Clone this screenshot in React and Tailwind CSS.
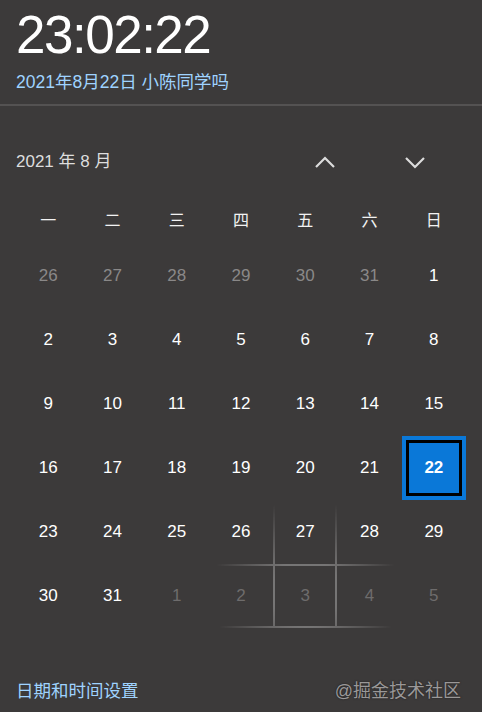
import React from "react";

const weeks = [
  [26, 27, 28, 29, 30, 31, 1],
  [2, 3, 4, 5, 6, 7, 8],
  [9, 10, 11, 12, 13, 14, 15],
  [16, 17, 18, 19, 20, 21, 22],
  [23, 24, 25, 26, 27, 28, 29],
  [30, 31, 1, 2, 3, 4, 5],
];

const dayNames = ["一", "二", "三", "四", "五", "六", "日"];

function Chevron({ up }) {
  return (
    <svg width="24" height="14" viewBox="0 0 24 14" fill="none">
      <path
        d={up ? "M3 12 L12 3 L21 12" : "M3 3 L12 12 L21 3"}
        stroke="#dcdcdc"
        strokeWidth="2.2"
      />
    </svg>
  );
}

function DayCell({ day, row, col }) {
  const other = (row === 0 && col < 6) || (row === 5 && col > 1);
  const today = row === 3 && col === 6;

  if (today) {
    return (
      <div className="h-[64px] border-[4px] border-[#0a78d8]">
        <div className="h-full border-[3px] border-black bg-[#0a78d8] flex items-center justify-center text-white font-bold text-[17px]">
          {day}
        </div>
      </div>
    );
  }

  let color = "text-white";
  if (other) color = row === 0 ? "text-[#8a8888]" : "text-[#6e6c6c]";

  return (
    <div className={`h-[64px] flex items-center justify-center text-[17px] ${color}`}>
      {day}
    </div>
  );
}

export default function App() {
  return (
    <div
      className="w-[482px] h-[712px] bg-[#3c3a3a] overflow-hidden flex flex-col"
      style={{ fontFamily: '"Liberation Sans", "Noto Sans CJK SC", sans-serif' }}
    >
      {/* clock */}
      <div className="px-4 pt-2 pb-[12px]">
        <div className="text-white text-[53px] leading-none tracking-[-1.5px]">
          23:02:22
        </div>
        <div className="mt-[11px] text-[#9fd3ff] text-[17.5px] leading-[20px]">
          2021年8月22日 小陈同学吗
        </div>
      </div>
      <div className="h-[2px] bg-[#545252]" />

      {/* calendar */}
      <div className="px-4 pt-[36px]">
        <div className="h-[40px] flex items-center">
          <span className="text-[#dedede] text-[17px]">2021 年 8 月</span>
          <div className="ml-auto flex items-center gap-[66px] pr-[39px]">
            <Chevron up />
            <Chevron />
          </div>
        </div>

        <div className="mt-[19px] w-[450px] grid grid-cols-7 h-[40px] items-center">
          {dayNames.map((d) => (
            <div key={d} className="text-center text-[#f2f2f2] text-[16px]">
              {d}
            </div>
          ))}
        </div>

        <div className="mt-[3px] w-[450px] relative">
          <div className="grid grid-cols-7">
            {weeks.map((w, r) =>
              w.map((d, c) => <DayCell key={`${r}-${c}`} day={d} row={r} col={c} />)
            )}
          </div>
          {/* hover reveal lines */}
          <div className="absolute left-[192.86px] top-[256px] w-[192.86px] h-[128px] grid grid-cols-3 grid-rows-2 pointer-events-none [mask-image:radial-gradient(circle_at_50%_72%,black_25%,transparent_70%)]">
            <div />
            <div className="border-x-2 border-white/30" />
            <div />
            <div className="border-y-2 border-white/30" />
            <div className="border-2 border-white/30" />
            <div className="border-y-2 border-white/30" />
          </div>
        </div>
      </div>

      {/* footer */}
      <div className="mt-auto px-4 pb-[7px] flex items-center justify-between">
        <span className="text-[#9fd3ff] text-[17.5px]">日期和时间设置</span>
        <span className="text-[#9a9898] text-[18px] pr-[5px] [text-shadow:0_0_2px_rgba(0,0,0,0.6)]">
          @掘金技术社区
        </span>
      </div>
    </div>
  );
}
